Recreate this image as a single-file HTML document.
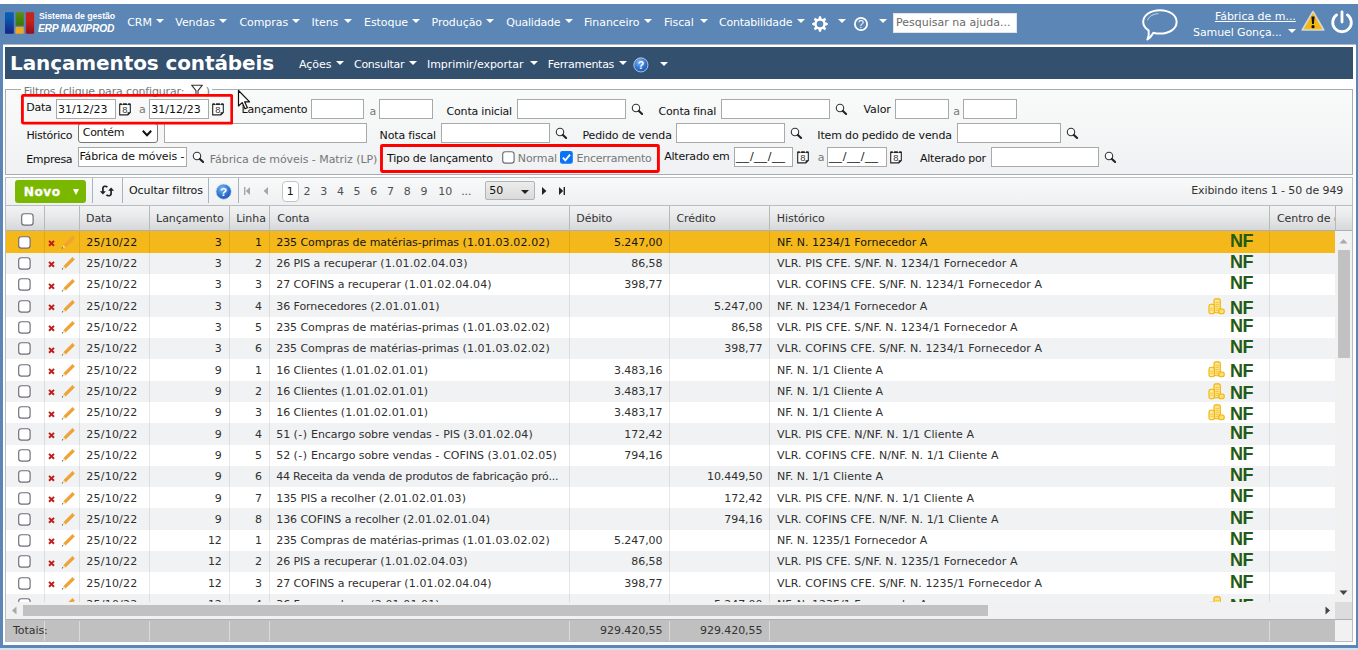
<!DOCTYPE html><html lang="pt-BR"><head><meta charset="utf-8"><title>Lançamentos contábeis</title><style>
*{box-sizing:border-box;margin:0;padding:0}
html,body{width:1358px;height:650px;overflow:hidden}
body{background:#5b86b5;font-family:"DejaVu Sans","Liberation Sans",sans-serif;font-size:11px;color:#111;position:relative}
.abs{position:absolute}
.t{position:absolute;white-space:nowrap;line-height:14px;height:14px;letter-spacing:-0.06px}
.w{color:#fff}
.inp{position:absolute;background:#fff;border:1.2px solid #a9a9a9;height:19.5px}
.inp>span{position:absolute;left:1px;top:2.4px;line-height:14px;white-space:nowrap}
.g{color:#777}
.u{display:inline-block;width:12.9px;transform:scaleX(1.172);transform-origin:0 50%}
.sl{display:inline-block;width:5.1px;text-align:center}
.arr{position:absolute;width:0;height:0;border-left:4.3px solid transparent;border-right:4.3px solid transparent;border-top:4.7px solid #fff}
.row{position:absolute;left:6px;width:1329px;height:21.4px;overflow:hidden}
.row .t{top:4.4px}
.r{text-align:right}
.vl{position:absolute;width:1px;background:#d4d4d4}
.cb{position:absolute;width:12.8px;height:12.8px;border:1.3px solid #6b6874;border-radius:3px;background:#fff}
.nf{position:absolute;font:bold 18px "Liberation Sans",sans-serif;color:#235a14;line-height:18px;letter-spacing:-0.4px}
</style></head><body>
<div class="abs" style="left:0;top:0;width:1358px;height:4px;background:#fff"></div>
<div class="abs" style="left:0;top:647.5px;width:1358px;height:3px;background:#cfe4f1"></div>
<svg class="abs" style="left:4px;top:11px" width="32" height="24" viewBox="0 0 32 24">
<defs><linearGradient id="lb" x1="0" y1="0" x2="0" y2="1"><stop offset="0.25" stop-color="#0b5bb2"/><stop offset="0.62" stop-color="#123f9c"/><stop offset="1" stop-color="#13238a"/></linearGradient>
<linearGradient id="lr" x1="0" y1="0" x2="0" y2="1"><stop offset="0.4" stop-color="#c6231e"/><stop offset="0.75" stop-color="#ab161d"/><stop offset="1" stop-color="#960c1c"/></linearGradient>
<linearGradient id="lg" x1="0" y1="0" x2="0" y2="1"><stop offset="0" stop-color="#5f8c0e"/><stop offset="1" stop-color="#37780a"/></linearGradient></defs>
<rect x="1" y="1.2" width="8.8" height="21.5" rx="0.8" fill="url(#lb)"/>
<rect x="11.7" y="1.2" width="8.1" height="13.6" rx="0.8" fill="url(#lg)"/>
<rect x="11.4" y="15.9" width="8.4" height="6.9" rx="1" fill="#efa91e"/>
<rect x="21.8" y="1.2" width="8.3" height="21.6" rx="0.8" fill="url(#lr)"/>
</svg>
<div class="t w" style="left:38.6px;top:9px;font:bold 9.6px 'Liberation Sans',sans-serif;line-height:14px;transform:scaleX(0.915);transform-origin:0 0">Sistema de gestão</div>
<div class="t w" style="left:38px;top:21px;font:italic bold 10.6px 'Liberation Sans',sans-serif;line-height:14px;letter-spacing:-0.25px;transform:scaleX(0.97);transform-origin:0 0">ERP MAXIPROD</div>
<div class="t w" style="top:16px;left:127.2px;">CRM</div>
<div class="arr" style="left:156.39999999999998px;top:19.2px"></div>
<div class="t w" style="top:16px;left:175.3px;">Vendas</div>
<div class="arr" style="left:219.0px;top:19.2px"></div>
<div class="t w" style="top:16px;left:239.4px;">Compras</div>
<div class="arr" style="left:291.7px;top:19.2px"></div>
<div class="t w" style="top:16px;left:311.5px;">Itens</div>
<div class="arr" style="left:344.2px;top:19.2px"></div>
<div class="t w" style="top:16px;left:364px;">Estoque</div>
<div class="arr" style="left:411.59999999999997px;top:19.2px"></div>
<div class="t w" style="top:16px;left:431.6px;">Produção</div>
<div class="arr" style="left:486.2px;top:19.2px"></div>
<div class="t w" style="top:16px;left:506.3px;letter-spacing:-0.22px">Qualidade</div>
<div class="arr" style="left:565.3000000000001px;top:19.2px"></div>
<div class="t w" style="top:16px;left:583.9px;">Financeiro</div>
<div class="arr" style="left:644.2px;top:19.2px"></div>
<div class="t w" style="top:16px;left:664px;">Fiscal</div>
<div class="arr" style="left:699.5px;top:19.2px"></div>
<div class="t w" style="top:16px;left:719px;letter-spacing:-0.22px">Contabilidade</div>
<div class="arr" style="left:796.5px;top:19.2px"></div>
<svg class="abs" style="left:811px;top:14.9px" width="18" height="18" viewBox="-9 -9 18 18"><path d="M-1.63 -5.25 L-1.01 -7.73 L1.01 -7.73 L1.63 -5.25 L2.57 -4.86 L4.75 -6.18 L6.18 -4.75 L4.86 -2.57 L5.25 -1.63 L7.73 -1.01 L7.73 1.01 L5.25 1.63 L4.86 2.57 L6.18 4.75 L4.75 6.18 L2.57 4.86 L1.63 5.25 L1.01 7.73 L-1.01 7.73 L-1.63 5.25 L-2.57 4.86 L-4.75 6.18 L-6.18 4.75 L-4.86 2.57 L-5.25 1.63 L-7.73 1.01 L-7.73 -1.01 L-5.25 -1.63 L-4.86 -2.57 L-6.18 -4.75 L-4.75 -6.18 L-2.57 -4.86Z" fill="#fff"/><circle r="5.4" fill="#fff"/><circle r="3.3" fill="#5b86b5"/></svg>
<div class="arr" style="left:837.8px;top:18.8px"></div>
<svg class="abs" style="left:852.9px;top:16px" width="16" height="16" viewBox="0 0 16 16"><circle cx="8" cy="8" r="6.1" fill="none" stroke="#fff" stroke-width="1.8"/>
<text x="8" y="11.8" text-anchor="middle" font-family="Liberation Sans,sans-serif" font-size="10.5" fill="#fff">?</text></svg>
<div class="arr" style="left:878.8px;top:18.8px"></div>
<div class="inp" style="left:893px;top:13.2px;width:124px;height:19.6px;border-color:#e4e4e4"><span style="left:2px;top:2px;color:#6a6a6a">Pesquisar na ajuda...</span></div>
<svg class="abs" style="left:1140px;top:7px" width="40" height="36" viewBox="0 0 40 36">
<path d="M20 3.2 C29.5 3.2 36.6 8.2 36.6 15 C36.6 21.8 29.5 26.6 20 26.6 C17.6 26.6 15.4 26.3 13.4 25.7 C11.8 28.6 10.2 30.8 7.4 32.4 C8.8 29.6 9.2 26.6 8.6 23.4 C5.2 21.2 3.2 18.4 3.2 15 C3.2 8.2 10.5 3.2 20 3.2 Z" fill="none" stroke="#fff" stroke-width="2" stroke-linejoin="round"/>
<path d="M7.6 13.2 C8.8 9.4 13 7 18.4 6.6" fill="none" stroke="#fff" stroke-width="0.9" opacity="0.75"/></svg>
<div class="t w" style="top:9.6px;right:62.200000000000045px;text-decoration:underline;letter-spacing:-0.03px">Fábrica de m...</div>
<div class="t w" style="top:26.4px;left:1193px;letter-spacing:-0.1px">Samuel Gonça...</div>
<div class="arr" style="left:1288.2px;top:29.2px"></div>
<svg class="abs" style="left:1300px;top:9px" width="26" height="24" viewBox="0 0 26 24">
<path d="M13 2.5 L23.8 21 H2.2 Z" fill="#f6c21c" stroke="#d6d6d6" stroke-width="1.6" stroke-linejoin="round"/>
<path d="M13 4.5 L21.5 19.6 H4.5 Z" fill="#f3b80f"/>
<path d="M11.4 7.6 H14.6 L13.9 15 H12.1 Z" fill="#111"/><circle cx="13" cy="17.7" r="1.6" fill="#111"/></svg>
<svg class="abs" style="left:1329.3px;top:9px" width="26" height="26" viewBox="0 0 26 26">
<path d="M7.6 5.9 A9.3 9.3 0 1 0 18.4 5.9" fill="none" stroke="#fff" stroke-width="2.8" stroke-linecap="round"/>
<line x1="13" y1="2.8" x2="13" y2="13" stroke="#fff" stroke-width="2.8" stroke-linecap="round"/></svg>
<div class="abs" style="left:3px;top:44px;width:1352.5px;height:601.1px;background:#fff;border-top:1px solid #b4b9bf"></div>
<div class="abs" style="left:5px;top:47px;width:1348px;height:31.5px;background:#34506f"></div>
<div class="t w" style="left:10px;top:49px;font:bold 20px 'DejaVu Sans','Liberation Sans',sans-serif;line-height:28px;height:28px;letter-spacing:-0.1px">Lançamentos contábeis</div>
<div class="t w" style="top:57.7px;left:299px;">Ações</div>
<div class="arr" style="left:336.2px;top:61px"></div>
<div class="t w" style="top:57.7px;left:354px;letter-spacing:-0.28px">Consultar</div>
<div class="arr" style="left:409.3px;top:61px"></div>
<div class="t w" style="top:57.7px;left:427px;">Imprimir/exportar</div>
<div class="arr" style="left:529.5px;top:61px"></div>
<div class="t w" style="top:57.7px;left:547.8px;letter-spacing:-0.28px">Ferramentas</div>
<div class="arr" style="left:619.1px;top:61px"></div>
<svg class="abs" style="left:633.4px;top:57px" width="15.8" height="15.8" viewBox="0 0 17 17">
<defs><radialGradient id="hg1" cx="0.4" cy="0.3" r="0.8"><stop offset="0" stop-color="#7db4f0"/><stop offset="0.6" stop-color="#2a6fd0"/><stop offset="1" stop-color="#1b4fa8"/></radialGradient></defs>
<circle cx="8.5" cy="8.5" r="7.6" fill="url(#hg1)" stroke="#dfe9f5" stroke-width="0.8"/>
<text x="8.5" y="12.6" text-anchor="middle" font-family="Liberation Sans,sans-serif" font-weight="bold" font-size="11.5" fill="#fff">?</text></svg>
<div class="arr" style="left:660px;top:61.5px"></div>
<div class="abs" style="left:5px;top:89px;width:1348px;height:86px;border:1px solid #a9adb3;background:linear-gradient(#f9fafa,#f0f1f2)"></div>
<div class="abs" style="left:20.5px;top:88px;width:191px;height:3px;background:#fff"></div>
<div class="t g" style="top:84.5px;left:23.8px;letter-spacing:-0.15px">Filtros (clique para configurar:</div>
<div class="t g" style="top:84.5px;left:205.8px;">)</div>
<svg class="abs" style="left:190px;top:83.6px" width="14" height="12" viewBox="0 0 14 12"><path d="M1.6 1.2 H12.4 L8 6.6 V11 H6 V6.6 Z" fill="#fff" stroke="#333" stroke-width="1.1" stroke-linejoin="round"/><path d="M6.4 7 H7.6 V11 H6.4Z" fill="#999"/></svg>
<div class="t " style="top:101.2px;left:26.3px;letter-spacing:-0.25px">Data</div>
<div class="inp" style="left:56px;top:99.2px;width:59.8px;height:19.5px;letter-spacing:0.02px"><span>31/12/23</span></div>
<svg class="abs" style="left:118px;top:102px" width="14" height="14" viewBox="0 0 14 14">
<path d="M1.7 2.2 H12.3 V10.4 L9.8 12.9 H1.7 Z" fill="#fff" stroke="#222" stroke-width="1.1" stroke-linejoin="miter"/>
<path d="M1.7 2.2 H12.3" stroke="#222" stroke-width="1.7"/>
<circle cx="4.4" cy="1.7" r="0.8" fill="#fff"/><circle cx="9.5" cy="1.7" r="0.8" fill="#fff"/>
<path d="M12.3 10.2 L9.6 12.9 V10.2 Z" fill="#1c1c1c"/>
<text x="6.9" y="11.3" text-anchor="middle" font-family="Liberation Sans,sans-serif" font-size="9.4" fill="#333">8</text></svg>
<div class="t g" style="top:102.6px;left:139px;">a</div>
<div class="inp" style="left:149.2px;top:99.2px;width:59.4px;height:19.5px;letter-spacing:0.02px"><span>31/12/23</span></div>
<svg class="abs" style="left:211.3px;top:102px" width="14" height="14" viewBox="0 0 14 14">
<path d="M1.7 2.2 H12.3 V10.4 L9.8 12.9 H1.7 Z" fill="#fff" stroke="#222" stroke-width="1.1" stroke-linejoin="miter"/>
<path d="M1.7 2.2 H12.3" stroke="#222" stroke-width="1.7"/>
<circle cx="4.4" cy="1.7" r="0.8" fill="#fff"/><circle cx="9.5" cy="1.7" r="0.8" fill="#fff"/>
<path d="M12.3 10.2 L9.6 12.9 V10.2 Z" fill="#1c1c1c"/>
<text x="6.9" y="11.3" text-anchor="middle" font-family="Liberation Sans,sans-serif" font-size="9.4" fill="#333">8</text></svg>
<div class="t " style="top:103.2px;left:241.6px;letter-spacing:-0.25px">Lançamento</div>
<div class="inp" style="left:311.2px;top:99.2px;width:53.1px;height:19.5px;"></div>
<div class="t g" style="top:104.8px;left:369.6px;">a</div>
<div class="inp" style="left:379.3px;top:99.2px;width:53.3px;height:19.5px;"></div>
<div class="t " style="top:104.5px;left:446.6px;letter-spacing:-0.2px">Conta inicial</div>
<div class="inp" style="left:517px;top:99.2px;width:108.7px;height:19.5px;"></div>
<svg class="abs" style="left:629.9px;top:102.6px" width="14" height="14" viewBox="0 0 14 14">
<circle cx="6" cy="5" r="3.7" fill="#fbfbfb" stroke="#333" stroke-width="1.1"/>
<path d="M8.9 7.9 L12.1 11" stroke="#222" stroke-width="2.1" stroke-linecap="round"/></svg>
<div class="t " style="top:104.5px;left:658.6px;letter-spacing:-0.2px">Conta final</div>
<div class="inp" style="left:721.3px;top:99.2px;width:108.4px;height:19.5px;"></div>
<svg class="abs" style="left:833.9px;top:102.6px" width="14" height="14" viewBox="0 0 14 14">
<circle cx="6" cy="5" r="3.7" fill="#fbfbfb" stroke="#333" stroke-width="1.1"/>
<path d="M8.9 7.9 L12.1 11" stroke="#222" stroke-width="2.1" stroke-linecap="round"/></svg>
<div class="t " style="top:103px;left:863.4px;">Valor</div>
<div class="inp" style="left:895.3px;top:99.2px;width:53.4px;height:19.5px;"></div>
<div class="t g" style="top:104.8px;left:953.3px;">a</div>
<div class="inp" style="left:963.2px;top:99.2px;width:53.6px;height:19.5px;"></div>
<div class="t " style="top:128.7px;left:26.4px;letter-spacing:-0.3px">Histórico</div>
<div class="inp" style="left:78.4px;top:123.4px;width:79.5px;height:19.5px;border:1px solid #767676;border-radius:3px"><span style="left:3.4px;top:2px;letter-spacing:-0.3px">Contém</span><svg class="abs" style="left:62px;top:5px" width="12" height="9" viewBox="0 0 12 9"><path d="M1.8 1.8 L6 6.2 L10.2 1.8" fill="none" stroke="#111" stroke-width="2"/></svg></div>
<div class="inp" style="left:163.5px;top:123.2px;width:203.3px;height:19.5px;"></div>
<div class="t " style="top:129.4px;left:379.6px;letter-spacing:-0.15px">Nota fiscal</div>
<div class="inp" style="left:441.2px;top:123.2px;width:108.4px;height:19.5px;"></div>
<svg class="abs" style="left:553.8px;top:126.6px" width="14" height="14" viewBox="0 0 14 14">
<circle cx="6" cy="5" r="3.7" fill="#fbfbfb" stroke="#333" stroke-width="1.1"/>
<path d="M8.9 7.9 L12.1 11" stroke="#222" stroke-width="2.1" stroke-linecap="round"/></svg>
<div class="t " style="top:129.4px;left:582.5px;letter-spacing:-0.15px">Pedido de venda</div>
<div class="inp" style="left:676px;top:123.2px;width:108.7px;height:19.5px;"></div>
<svg class="abs" style="left:788.9px;top:126.6px" width="14" height="14" viewBox="0 0 14 14">
<circle cx="6" cy="5" r="3.7" fill="#fbfbfb" stroke="#333" stroke-width="1.1"/>
<path d="M8.9 7.9 L12.1 11" stroke="#222" stroke-width="2.1" stroke-linecap="round"/></svg>
<div class="t " style="top:129.2px;left:817.3px;letter-spacing:-0.15px">Item do pedido de venda</div>
<div class="inp" style="left:957.4px;top:123.2px;width:103.2px;height:19.5px;"></div>
<svg class="abs" style="left:1064.8px;top:126.6px" width="14" height="14" viewBox="0 0 14 14">
<circle cx="6" cy="5" r="3.7" fill="#fbfbfb" stroke="#333" stroke-width="1.1"/>
<path d="M8.9 7.9 L12.1 11" stroke="#222" stroke-width="2.1" stroke-linecap="round"/></svg>
<div class="t " style="top:153.1px;left:26.2px;letter-spacing:-0.3px">Empresa</div>
<div class="inp" style="left:78.4px;top:147px;width:108.6px;height:19.5px;overflow:hidden;text-indent:-1px;letter-spacing:-0.12px"><span>Fábrica de móveis -</span></div>
<svg class="abs" style="left:190.7px;top:150.6px" width="14" height="14" viewBox="0 0 14 14">
<circle cx="6" cy="5" r="3.7" fill="#fbfbfb" stroke="#333" stroke-width="1.1"/>
<path d="M8.9 7.9 L12.1 11" stroke="#222" stroke-width="2.1" stroke-linecap="round"/></svg>
<div class="t g" style="top:153.2px;left:209.8px;">Fábrica de móveis - Matriz (LP)</div>
<div class="t " style="top:151.7px;left:387px;letter-spacing:-0.18px">Tipo de lançamento</div>
<svg class="abs" style="left:502px;top:151.1px" width="13" height="13" viewBox="0 0 13 13"><rect x="0.7" y="0.7" width="11.4" height="11.4" rx="2.6" fill="#fff" stroke="#6f6c78" stroke-width="1.15"/></svg>
<div class="t g" style="top:152px;left:517.8px;letter-spacing:-0.1px">Normal</div>
<svg class="abs" style="left:560.1px;top:151px" width="13" height="13" viewBox="0 0 13 13"><rect x="0" y="0" width="12.8" height="12.8" rx="2.3" fill="#0b74f6"/><path d="M2.9 6.7 L5.3 9.3 L10 3.6" fill="none" stroke="#fff" stroke-width="1.8"/></svg>
<div class="t g" style="top:152px;left:576.6px;letter-spacing:-0.25px">Encerramento</div>
<div class="t " style="top:150.2px;left:664.2px;letter-spacing:-0.2px">Alterado em</div>
<div class="inp" style="left:734.3px;top:147px;width:59.1px;height:19.5px;"><span><span class="u">__</span><span class="sl">/</span><span class="u">__</span><span class="sl">/</span><span class="u">__</span></span></div>
<svg class="abs" style="left:796.2px;top:150px" width="14" height="14" viewBox="0 0 14 14">
<path d="M1.7 2.2 H12.3 V10.4 L9.8 12.9 H1.7 Z" fill="#fff" stroke="#222" stroke-width="1.1" stroke-linejoin="miter"/>
<path d="M1.7 2.2 H12.3" stroke="#222" stroke-width="1.7"/>
<circle cx="4.4" cy="1.7" r="0.8" fill="#fff"/><circle cx="9.5" cy="1.7" r="0.8" fill="#fff"/>
<path d="M12.3 10.2 L9.6 12.9 V10.2 Z" fill="#1c1c1c"/>
<text x="6.9" y="11.3" text-anchor="middle" font-family="Liberation Sans,sans-serif" font-size="9.4" fill="#333">8</text></svg>
<div class="t g" style="top:151px;left:817.7px;">a</div>
<div class="inp" style="left:827.2px;top:147px;width:59.4px;height:19.5px;"><span><span class="u">__</span><span class="sl">/</span><span class="u">__</span><span class="sl">/</span><span class="u">__</span></span></div>
<svg class="abs" style="left:889.3px;top:150px" width="14" height="14" viewBox="0 0 14 14">
<path d="M1.7 2.2 H12.3 V10.4 L9.8 12.9 H1.7 Z" fill="#fff" stroke="#222" stroke-width="1.1" stroke-linejoin="miter"/>
<path d="M1.7 2.2 H12.3" stroke="#222" stroke-width="1.7"/>
<circle cx="4.4" cy="1.7" r="0.8" fill="#fff"/><circle cx="9.5" cy="1.7" r="0.8" fill="#fff"/>
<path d="M12.3 10.2 L9.6 12.9 V10.2 Z" fill="#1c1c1c"/>
<text x="6.9" y="11.3" text-anchor="middle" font-family="Liberation Sans,sans-serif" font-size="9.4" fill="#333">8</text></svg>
<div class="t " style="top:152.4px;left:919.9px;letter-spacing:-0.2px">Alterado por</div>
<div class="inp" style="left:990.5px;top:147px;width:108.4px;height:19.5px;"></div>
<svg class="abs" style="left:1103.1px;top:150.6px" width="14" height="14" viewBox="0 0 14 14">
<circle cx="6" cy="5" r="3.7" fill="#fbfbfb" stroke="#333" stroke-width="1.1"/>
<path d="M8.9 7.9 L12.1 11" stroke="#222" stroke-width="2.1" stroke-linecap="round"/></svg>
<svg class="abs" style="left:21.2px;top:94.2px" width="212.20000000000002" height="30.599999999999994" viewBox="0 0 212.20000000000002 30.599999999999994"><rect x="1.4" y="1.4" width="209.4" height="27.799999999999994" rx="0.9" fill="none" stroke="#ff0000" stroke-width="2.8"/></svg>
<svg class="abs" style="left:380px;top:144px" width="279.9" height="28.900000000000006" viewBox="0 0 279.9 28.900000000000006"><rect x="1.45" y="1.45" width="277.0" height="26.000000000000007" rx="0.9" fill="none" stroke="#ff0000" stroke-width="2.9"/></svg>
<svg class="abs" style="left:237px;top:88.5px" width="15" height="22" viewBox="0 0 15 22"><path d="M1.5 1.5 V17 L5.2 13.6 L8 19.8 L10.4 18.8 L7.6 12.8 H12.6 Z" fill="#fff" stroke="#111" stroke-width="1.2" stroke-linejoin="round"/></svg>
<div class="abs" style="left:5px;top:176.5px;width:1348px;height:29.5px;border:1px solid #b9bfc7;background:linear-gradient(#f8f9f9,#eff0f1)"></div>
<div class="abs" style="left:15px;top:180px;width:71px;height:23px;background:#7ab800;border-radius:3px"></div>
<div class="t w" style="left:23.8px;top:184.1px;font:bold 12.2px 'DejaVu Sans','Liberation Sans',sans-serif;line-height:17px;height:17px;letter-spacing:0.5px;-webkit-text-stroke:0.3px #fff">Novo</div>
<div class="arr" style="left:73px;top:188.9px;border-left-width:3px;border-right-width:3px;border-top-width:6px"></div>
<div class="vl" style="left:92px;top:178px;height:24.5px;background:#a9b3c0"></div>
<div class="vl" style="left:122px;top:178px;height:24.5px;background:#a9b3c0"></div>
<div class="vl" style="left:208px;top:178px;height:24.5px;background:#a9b3c0"></div>
<div class="vl" style="left:238px;top:178px;height:24.5px;background:#a9b3c0"></div>
<svg class="abs" style="left:99px;top:185px" width="16" height="12" viewBox="0 0 16 12">
<path d="M8.3 2.3 C7.4 0.9 3.9 0.6 3.9 3.4 V7" fill="none" stroke="#222" stroke-width="1.7"/>
<path d="M0.9 6.2 H6.9 L3.9 9.5 Z" fill="#222"/>
<path d="M7.5 9.7 C8.4 11.1 12.1 11.4 12.1 8.6 V5" fill="none" stroke="#222" stroke-width="1.7"/>
<path d="M9.1 5.8 H15.1 L12.1 2.5 Z" fill="#222"/></svg>
<div class="t " style="top:184.2px;left:129px;">Ocultar filtros</div>
<svg class="abs" style="left:214.9px;top:183.2px" width="17.3" height="17.3" viewBox="0 0 17 17">
<defs><radialGradient id="hg2" cx="0.4" cy="0.3" r="0.8"><stop offset="0" stop-color="#7db4f0"/><stop offset="0.6" stop-color="#2a6fd0"/><stop offset="1" stop-color="#1b4fa8"/></radialGradient></defs>
<circle cx="8.5" cy="8.5" r="7.6" fill="url(#hg2)" stroke="#dfe9f5" stroke-width="0.8"/>
<text x="8.5" y="12.6" text-anchor="middle" font-family="Liberation Sans,sans-serif" font-weight="bold" font-size="11.5" fill="#fff">?</text></svg>
<svg class="abs" style="left:243px;top:186px" width="8" height="10" viewBox="0 0 8 10"><rect x="1" y="1" width="1.4" height="8" fill="#a6a6a6"/><path d="M7 1 V9 L2.8 5Z" fill="#a6a6a6"/></svg>
<svg class="abs" style="left:262px;top:186px" width="8" height="10" viewBox="0 0 8 10"><path d="M6 1 V9 L1.6 5Z" fill="#a6a6a6"/></svg>
<div class="abs" style="left:282px;top:180.5px;width:16.6px;height:21px;border:1px solid #c4c4c4;border-radius:4px;background:#fff"></div>
<div class="t " style="top:184.6px;left:286.7px;">1</div>
<div class="t " style="top:184.6px;left:303.5px;color:#505050">2</div>
<div class="t " style="top:184.6px;left:320.2px;color:#505050">3</div>
<div class="t " style="top:184.6px;left:337px;color:#505050">4</div>
<div class="t " style="top:184.6px;left:353.6px;color:#505050">5</div>
<div class="t " style="top:184.6px;left:370.3px;color:#505050">6</div>
<div class="t " style="top:184.6px;left:387px;color:#505050">7</div>
<div class="t " style="top:184.6px;left:403.8px;color:#505050">8</div>
<div class="t " style="top:184.6px;left:420.4px;color:#505050">9</div>
<div class="t " style="top:184.6px;left:438.2px;color:#505050">10</div>
<div class="t " style="top:184.6px;left:461.2px;color:#505050">...</div>
<div class="abs" style="left:485px;top:181px;width:49.8px;height:19px;background:linear-gradient(#ececec,#dadada);border:1px solid #b4b4b4;border-radius:2px"></div>
<div class="t " style="top:183.6px;left:489.3px;">50</div>
<div class="arr" style="left:521.2px;top:190.2px;border-top-color:#222;border-top-width:4.5px;border-left-width:4.9px;border-right-width:4.9px"></div>
<svg class="abs" style="left:540px;top:186px" width="8" height="10" viewBox="0 0 8 10"><path d="M2 1 V9 L6.4 5Z" fill="#222"/></svg>
<svg class="abs" style="left:558px;top:186px" width="8" height="10" viewBox="0 0 8 10"><path d="M1 1 V9 L5.2 5Z" fill="#222"/><rect x="5.6" y="1" width="1.4" height="8" fill="#222"/></svg>
<div class="t " style="top:184.2px;right:14.799999999999955px;color:#333;letter-spacing:-0.1px">Exibindo itens 1 - 50 de 949</div>
<div class="abs" style="left:5px;top:205px;width:1348px;height:437px;border:1px solid #b9bdc3;background:#fff"></div>
<div class="abs" style="left:6px;top:206px;width:1346px;height:25.4px;background:linear-gradient(#f2f3f3,#e8e9ea 45%,#d5d7da);border-bottom:1px solid #a9b0b9"></div>
<div class="abs" style="left:1335px;top:206px;width:17px;height:25.4px;background:linear-gradient(#f2f3f3,#e8e9ea 45%,#d5d7da);border-left:1px solid #b9b9b9;border-bottom:1px solid #a9b0b9"></div>
<div class="vl" style="left:43.7px;top:206px;height:25px;background:#b9b9b9"></div>
<div class="vl" style="left:79px;top:206px;height:25px;background:#b9b9b9"></div>
<div class="vl" style="left:149px;top:206px;height:25px;background:#b9b9b9"></div>
<div class="vl" style="left:229.2px;top:206px;height:25px;background:#b9b9b9"></div>
<div class="vl" style="left:268.5px;top:206px;height:25px;background:#b9b9b9"></div>
<div class="vl" style="left:569px;top:206px;height:25px;background:#b9b9b9"></div>
<div class="vl" style="left:669.4px;top:206px;height:25px;background:#b9b9b9"></div>
<div class="vl" style="left:769.4px;top:206px;height:25px;background:#b9b9b9"></div>
<div class="vl" style="left:1269.2px;top:206px;height:25px;background:#b9b9b9"></div>
<svg class="abs" style="left:21.3px;top:212.6px" width="13" height="13" viewBox="0 0 13 13"><rect x="0.7" y="0.7" width="11.4" height="11.4" rx="2.6" fill="#fff" stroke="#6f6c78" stroke-width="1.15"/></svg>
<div class="t" style="left:86.0px;top:211.7px;color:#333;">Data</div>
<div class="t" style="left:156.1px;top:211.7px;color:#333;">Lançamento</div>
<div class="t" style="left:236.3px;top:211.7px;color:#333;">Linha</div>
<div class="t" style="left:277.29999999999995px;top:211.7px;color:#333;">Conta</div>
<div class="t" style="left:576.3px;top:211.7px;color:#333;">Débito</div>
<div class="t" style="left:676.4px;top:211.7px;color:#333;">Crédito</div>
<div class="t" style="left:776.8px;top:211.7px;color:#333;">Histórico</div>
<div class="t" style="left:1277.0px;top:211.7px;color:#333;width:57.6px;overflow:hidden;">Centro de c</div>
<div class="row" style="top:231.40px;height:21.61px;background:#f5b81b;color:#151515">
<svg class="abs" style="left:12.2px;top:4.4px" width="13" height="13" viewBox="0 0 13 13"><rect x="0.7" y="0.7" width="11.4" height="11.4" rx="2.6" fill="#fff" stroke="#6f6c78" stroke-width="1.15"/></svg><svg class="abs" style="left:41.9px;top:8.7px" width="7" height="7" viewBox="0 0 7 7"><path d="M1 0.9 L6 5.8 M6 0.9 L1 5.8" stroke="#c01a18" stroke-width="1.9"/></svg><svg class="abs" style="left:55.3px;top:3.7px" width="15" height="14" viewBox="0 0 15 14"><path d="M2.5 10.2 L11.5 1.3 L13.6 3.4 L4.6 12.3 Z" fill="#f0a234" stroke="#e59a2e" stroke-width="0.4"/><path d="M2.5 10.2 L4.6 12.3 L1.1 13.3 Z" fill="#f5deb0"/><path d="M1.1 13.3 L1.5 12.4 L2 12.9Z" fill="#333" stroke="#333" stroke-width="0.4"/></svg>
<div class="t" style="left:80.3px;letter-spacing:0.22px">25/10/22</div>
<div class="t r" style="right:1113.2px">3</div><div class="t r" style="right:1073.1px">1</div>
<div class="t" style="left:270.2px">235 Compras de matérias-primas <span style="letter-spacing:0.12px">(1.01.03.02.02)</span></div>
<div class="t r" style="right:672.5px">5.247,00</div>
<div class="t" style="left:770.9px;letter-spacing:0.02px">NF. N. 1234/1 Fornecedor A</div>
<div class="nf" style="left:1224px;top:0.3px">NF</div>
</div>
<div class="row" style="top:252.71px;height:21.61px;background:#f1f2f3;color:#303030">
<svg class="abs" style="left:12.2px;top:4.4px" width="13" height="13" viewBox="0 0 13 13"><rect x="0.7" y="0.7" width="11.4" height="11.4" rx="2.6" fill="#fff" stroke="#6f6c78" stroke-width="1.15"/></svg><svg class="abs" style="left:41.9px;top:8.7px" width="7" height="7" viewBox="0 0 7 7"><path d="M1 0.9 L6 5.8 M6 0.9 L1 5.8" stroke="#c01a18" stroke-width="1.9"/></svg><svg class="abs" style="left:55.3px;top:3.7px" width="15" height="14" viewBox="0 0 15 14"><path d="M2.5 10.2 L11.5 1.3 L13.6 3.4 L4.6 12.3 Z" fill="#f0a234" stroke="#e59a2e" stroke-width="0.4"/><path d="M2.5 10.2 L4.6 12.3 L1.1 13.3 Z" fill="#f5deb0"/><path d="M1.1 13.3 L1.5 12.4 L2 12.9Z" fill="#333" stroke="#333" stroke-width="0.4"/></svg>
<div class="t" style="left:80.3px;letter-spacing:0.22px">25/10/22</div>
<div class="t r" style="right:1113.2px">3</div><div class="t r" style="right:1073.1px">2</div>
<div class="t" style="left:270.2px">26 PIS a recuperar <span style="letter-spacing:0.12px">(1.01.02.04.03)</span></div>
<div class="t r" style="right:672.5px">86,58</div>
<div class="t" style="left:770.9px;letter-spacing:0.09px">VLR. PIS CFE. S/NF. N. 1234/1 Fornecedor A</div>
<div class="nf" style="left:1224px;top:0.3px">NF</div>
</div>
<div class="row" style="top:274.02px;height:21.61px;background:#fff;color:#303030">
<svg class="abs" style="left:12.2px;top:4.4px" width="13" height="13" viewBox="0 0 13 13"><rect x="0.7" y="0.7" width="11.4" height="11.4" rx="2.6" fill="#fff" stroke="#6f6c78" stroke-width="1.15"/></svg><svg class="abs" style="left:41.9px;top:8.7px" width="7" height="7" viewBox="0 0 7 7"><path d="M1 0.9 L6 5.8 M6 0.9 L1 5.8" stroke="#c01a18" stroke-width="1.9"/></svg><svg class="abs" style="left:55.3px;top:3.7px" width="15" height="14" viewBox="0 0 15 14"><path d="M2.5 10.2 L11.5 1.3 L13.6 3.4 L4.6 12.3 Z" fill="#f0a234" stroke="#e59a2e" stroke-width="0.4"/><path d="M2.5 10.2 L4.6 12.3 L1.1 13.3 Z" fill="#f5deb0"/><path d="M1.1 13.3 L1.5 12.4 L2 12.9Z" fill="#333" stroke="#333" stroke-width="0.4"/></svg>
<div class="t" style="left:80.3px;letter-spacing:0.22px">25/10/22</div>
<div class="t r" style="right:1113.2px">3</div><div class="t r" style="right:1073.1px">3</div>
<div class="t" style="left:270.2px">27 COFINS a recuperar <span style="letter-spacing:0.12px">(1.01.02.04.04)</span></div>
<div class="t r" style="right:672.5px">398,77</div>
<div class="t" style="left:770.9px;letter-spacing:0.09px">VLR. COFINS CFE. S/NF. N. 1234/1 Fornecedor A</div>
<div class="nf" style="left:1224px;top:0.3px">NF</div>
</div>
<div class="row" style="top:295.34px;height:21.61px;background:#f1f2f3;color:#303030">
<svg class="abs" style="left:12.2px;top:4.4px" width="13" height="13" viewBox="0 0 13 13"><rect x="0.7" y="0.7" width="11.4" height="11.4" rx="2.6" fill="#fff" stroke="#6f6c78" stroke-width="1.15"/></svg><svg class="abs" style="left:41.9px;top:8.7px" width="7" height="7" viewBox="0 0 7 7"><path d="M1 0.9 L6 5.8 M6 0.9 L1 5.8" stroke="#c01a18" stroke-width="1.9"/></svg><svg class="abs" style="left:55.3px;top:3.7px" width="15" height="14" viewBox="0 0 15 14"><path d="M2.5 10.2 L11.5 1.3 L13.6 3.4 L4.6 12.3 Z" fill="#f0a234" stroke="#e59a2e" stroke-width="0.4"/><path d="M2.5 10.2 L4.6 12.3 L1.1 13.3 Z" fill="#f5deb0"/><path d="M1.1 13.3 L1.5 12.4 L2 12.9Z" fill="#333" stroke="#333" stroke-width="0.4"/></svg>
<div class="t" style="left:80.3px;letter-spacing:0.22px">25/10/22</div>
<div class="t r" style="right:1113.2px">3</div><div class="t r" style="right:1073.1px">4</div>
<div class="t" style="left:270.2px">36 Fornecedores <span style="letter-spacing:0.12px">(2.01.01.01)</span></div>
<div class="t r" style="right:572.6px">5.247,00</div>
<div class="t" style="left:770.9px;letter-spacing:0.02px">NF. N. 1234/1 Fornecedor A</div>
<svg class="abs" style="left:1202.1px;top:2.2px" width="17" height="17" viewBox="0 0 17 17"><g stroke="#f2b100" stroke-width="1.1"><rect x="6" y="0.9" width="6.3" height="13.9" rx="1.7" fill="#fbe794"/><path d="M7.4 4.4H10.9M7.4 6.4H10.9M7.4 8.4H10.9M7.4 10.4H10.9M7.4 12.4H10.9" stroke="#f5c02a" stroke-width="0.9"/><rect x="1" y="6.3" width="5.3" height="9.4" rx="1.7" fill="#fce99a"/><path d="M2.4 10.3H4.9M2.4 12.3H4.9" stroke="#f5c02a" stroke-width="0.9"/><rect x="10.8" y="11" width="5.4" height="4.8" rx="1.7" fill="#fbe17c"/></g></svg>
<div class="nf" style="left:1224px;top:3.2px">NF</div>
</div>
<div class="row" style="top:316.65px;height:21.61px;background:#fff;color:#303030">
<svg class="abs" style="left:12.2px;top:4.4px" width="13" height="13" viewBox="0 0 13 13"><rect x="0.7" y="0.7" width="11.4" height="11.4" rx="2.6" fill="#fff" stroke="#6f6c78" stroke-width="1.15"/></svg><svg class="abs" style="left:41.9px;top:8.7px" width="7" height="7" viewBox="0 0 7 7"><path d="M1 0.9 L6 5.8 M6 0.9 L1 5.8" stroke="#c01a18" stroke-width="1.9"/></svg><svg class="abs" style="left:55.3px;top:3.7px" width="15" height="14" viewBox="0 0 15 14"><path d="M2.5 10.2 L11.5 1.3 L13.6 3.4 L4.6 12.3 Z" fill="#f0a234" stroke="#e59a2e" stroke-width="0.4"/><path d="M2.5 10.2 L4.6 12.3 L1.1 13.3 Z" fill="#f5deb0"/><path d="M1.1 13.3 L1.5 12.4 L2 12.9Z" fill="#333" stroke="#333" stroke-width="0.4"/></svg>
<div class="t" style="left:80.3px;letter-spacing:0.22px">25/10/22</div>
<div class="t r" style="right:1113.2px">3</div><div class="t r" style="right:1073.1px">5</div>
<div class="t" style="left:270.2px">235 Compras de matérias-primas <span style="letter-spacing:0.12px">(1.01.03.02.02)</span></div>
<div class="t r" style="right:572.6px">86,58</div>
<div class="t" style="left:770.9px;letter-spacing:0.09px">VLR. PIS CFE. S/NF. N. 1234/1 Fornecedor A</div>
<div class="nf" style="left:1224px;top:0.3px">NF</div>
</div>
<div class="row" style="top:337.96px;height:21.61px;background:#f1f2f3;color:#303030">
<svg class="abs" style="left:12.2px;top:4.4px" width="13" height="13" viewBox="0 0 13 13"><rect x="0.7" y="0.7" width="11.4" height="11.4" rx="2.6" fill="#fff" stroke="#6f6c78" stroke-width="1.15"/></svg><svg class="abs" style="left:41.9px;top:8.7px" width="7" height="7" viewBox="0 0 7 7"><path d="M1 0.9 L6 5.8 M6 0.9 L1 5.8" stroke="#c01a18" stroke-width="1.9"/></svg><svg class="abs" style="left:55.3px;top:3.7px" width="15" height="14" viewBox="0 0 15 14"><path d="M2.5 10.2 L11.5 1.3 L13.6 3.4 L4.6 12.3 Z" fill="#f0a234" stroke="#e59a2e" stroke-width="0.4"/><path d="M2.5 10.2 L4.6 12.3 L1.1 13.3 Z" fill="#f5deb0"/><path d="M1.1 13.3 L1.5 12.4 L2 12.9Z" fill="#333" stroke="#333" stroke-width="0.4"/></svg>
<div class="t" style="left:80.3px;letter-spacing:0.22px">25/10/22</div>
<div class="t r" style="right:1113.2px">3</div><div class="t r" style="right:1073.1px">6</div>
<div class="t" style="left:270.2px">235 Compras de matérias-primas <span style="letter-spacing:0.12px">(1.01.03.02.02)</span></div>
<div class="t r" style="right:572.6px">398,77</div>
<div class="t" style="left:770.9px;letter-spacing:0.09px">VLR. COFINS CFE. S/NF. N. 1234/1 Fornecedor A</div>
<div class="nf" style="left:1224px;top:0.3px">NF</div>
</div>
<div class="row" style="top:359.27px;height:21.61px;background:#fff;color:#303030">
<svg class="abs" style="left:12.2px;top:4.4px" width="13" height="13" viewBox="0 0 13 13"><rect x="0.7" y="0.7" width="11.4" height="11.4" rx="2.6" fill="#fff" stroke="#6f6c78" stroke-width="1.15"/></svg><svg class="abs" style="left:41.9px;top:8.7px" width="7" height="7" viewBox="0 0 7 7"><path d="M1 0.9 L6 5.8 M6 0.9 L1 5.8" stroke="#c01a18" stroke-width="1.9"/></svg><svg class="abs" style="left:55.3px;top:3.7px" width="15" height="14" viewBox="0 0 15 14"><path d="M2.5 10.2 L11.5 1.3 L13.6 3.4 L4.6 12.3 Z" fill="#f0a234" stroke="#e59a2e" stroke-width="0.4"/><path d="M2.5 10.2 L4.6 12.3 L1.1 13.3 Z" fill="#f5deb0"/><path d="M1.1 13.3 L1.5 12.4 L2 12.9Z" fill="#333" stroke="#333" stroke-width="0.4"/></svg>
<div class="t" style="left:80.3px;letter-spacing:0.22px">25/10/22</div>
<div class="t r" style="right:1113.2px">9</div><div class="t r" style="right:1073.1px">1</div>
<div class="t" style="left:270.2px">16 Clientes <span style="letter-spacing:0.12px">(1.01.02.01.01)</span></div>
<div class="t r" style="right:672.5px">3.483,16</div>
<div class="t" style="left:770.9px;letter-spacing:0.02px">NF. N. 1/1 Cliente A</div>
<svg class="abs" style="left:1202.1px;top:2.2px" width="17" height="17" viewBox="0 0 17 17"><g stroke="#f2b100" stroke-width="1.1"><rect x="6" y="0.9" width="6.3" height="13.9" rx="1.7" fill="#fbe794"/><path d="M7.4 4.4H10.9M7.4 6.4H10.9M7.4 8.4H10.9M7.4 10.4H10.9M7.4 12.4H10.9" stroke="#f5c02a" stroke-width="0.9"/><rect x="1" y="6.3" width="5.3" height="9.4" rx="1.7" fill="#fce99a"/><path d="M2.4 10.3H4.9M2.4 12.3H4.9" stroke="#f5c02a" stroke-width="0.9"/><rect x="10.8" y="11" width="5.4" height="4.8" rx="1.7" fill="#fbe17c"/></g></svg>
<div class="nf" style="left:1224px;top:3.2px">NF</div>
</div>
<div class="row" style="top:380.59px;height:21.61px;background:#f1f2f3;color:#303030">
<svg class="abs" style="left:12.2px;top:4.4px" width="13" height="13" viewBox="0 0 13 13"><rect x="0.7" y="0.7" width="11.4" height="11.4" rx="2.6" fill="#fff" stroke="#6f6c78" stroke-width="1.15"/></svg><svg class="abs" style="left:41.9px;top:8.7px" width="7" height="7" viewBox="0 0 7 7"><path d="M1 0.9 L6 5.8 M6 0.9 L1 5.8" stroke="#c01a18" stroke-width="1.9"/></svg><svg class="abs" style="left:55.3px;top:3.7px" width="15" height="14" viewBox="0 0 15 14"><path d="M2.5 10.2 L11.5 1.3 L13.6 3.4 L4.6 12.3 Z" fill="#f0a234" stroke="#e59a2e" stroke-width="0.4"/><path d="M2.5 10.2 L4.6 12.3 L1.1 13.3 Z" fill="#f5deb0"/><path d="M1.1 13.3 L1.5 12.4 L2 12.9Z" fill="#333" stroke="#333" stroke-width="0.4"/></svg>
<div class="t" style="left:80.3px;letter-spacing:0.22px">25/10/22</div>
<div class="t r" style="right:1113.2px">9</div><div class="t r" style="right:1073.1px">2</div>
<div class="t" style="left:270.2px">16 Clientes <span style="letter-spacing:0.12px">(1.01.02.01.01)</span></div>
<div class="t r" style="right:672.5px">3.483,17</div>
<div class="t" style="left:770.9px;letter-spacing:0.02px">NF. N. 1/1 Cliente A</div>
<svg class="abs" style="left:1202.1px;top:2.2px" width="17" height="17" viewBox="0 0 17 17"><g stroke="#f2b100" stroke-width="1.1"><rect x="6" y="0.9" width="6.3" height="13.9" rx="1.7" fill="#fbe794"/><path d="M7.4 4.4H10.9M7.4 6.4H10.9M7.4 8.4H10.9M7.4 10.4H10.9M7.4 12.4H10.9" stroke="#f5c02a" stroke-width="0.9"/><rect x="1" y="6.3" width="5.3" height="9.4" rx="1.7" fill="#fce99a"/><path d="M2.4 10.3H4.9M2.4 12.3H4.9" stroke="#f5c02a" stroke-width="0.9"/><rect x="10.8" y="11" width="5.4" height="4.8" rx="1.7" fill="#fbe17c"/></g></svg>
<div class="nf" style="left:1224px;top:3.2px">NF</div>
</div>
<div class="row" style="top:401.90px;height:21.61px;background:#fff;color:#303030">
<svg class="abs" style="left:12.2px;top:4.4px" width="13" height="13" viewBox="0 0 13 13"><rect x="0.7" y="0.7" width="11.4" height="11.4" rx="2.6" fill="#fff" stroke="#6f6c78" stroke-width="1.15"/></svg><svg class="abs" style="left:41.9px;top:8.7px" width="7" height="7" viewBox="0 0 7 7"><path d="M1 0.9 L6 5.8 M6 0.9 L1 5.8" stroke="#c01a18" stroke-width="1.9"/></svg><svg class="abs" style="left:55.3px;top:3.7px" width="15" height="14" viewBox="0 0 15 14"><path d="M2.5 10.2 L11.5 1.3 L13.6 3.4 L4.6 12.3 Z" fill="#f0a234" stroke="#e59a2e" stroke-width="0.4"/><path d="M2.5 10.2 L4.6 12.3 L1.1 13.3 Z" fill="#f5deb0"/><path d="M1.1 13.3 L1.5 12.4 L2 12.9Z" fill="#333" stroke="#333" stroke-width="0.4"/></svg>
<div class="t" style="left:80.3px;letter-spacing:0.22px">25/10/22</div>
<div class="t r" style="right:1113.2px">9</div><div class="t r" style="right:1073.1px">3</div>
<div class="t" style="left:270.2px">16 Clientes <span style="letter-spacing:0.12px">(1.01.02.01.01)</span></div>
<div class="t r" style="right:672.5px">3.483,17</div>
<div class="t" style="left:770.9px;letter-spacing:0.02px">NF. N. 1/1 Cliente A</div>
<svg class="abs" style="left:1202.1px;top:2.2px" width="17" height="17" viewBox="0 0 17 17"><g stroke="#f2b100" stroke-width="1.1"><rect x="6" y="0.9" width="6.3" height="13.9" rx="1.7" fill="#fbe794"/><path d="M7.4 4.4H10.9M7.4 6.4H10.9M7.4 8.4H10.9M7.4 10.4H10.9M7.4 12.4H10.9" stroke="#f5c02a" stroke-width="0.9"/><rect x="1" y="6.3" width="5.3" height="9.4" rx="1.7" fill="#fce99a"/><path d="M2.4 10.3H4.9M2.4 12.3H4.9" stroke="#f5c02a" stroke-width="0.9"/><rect x="10.8" y="11" width="5.4" height="4.8" rx="1.7" fill="#fbe17c"/></g></svg>
<div class="nf" style="left:1224px;top:3.2px">NF</div>
</div>
<div class="row" style="top:423.21px;height:21.61px;background:#f1f2f3;color:#303030">
<svg class="abs" style="left:12.2px;top:4.4px" width="13" height="13" viewBox="0 0 13 13"><rect x="0.7" y="0.7" width="11.4" height="11.4" rx="2.6" fill="#fff" stroke="#6f6c78" stroke-width="1.15"/></svg><svg class="abs" style="left:41.9px;top:8.7px" width="7" height="7" viewBox="0 0 7 7"><path d="M1 0.9 L6 5.8 M6 0.9 L1 5.8" stroke="#c01a18" stroke-width="1.9"/></svg><svg class="abs" style="left:55.3px;top:3.7px" width="15" height="14" viewBox="0 0 15 14"><path d="M2.5 10.2 L11.5 1.3 L13.6 3.4 L4.6 12.3 Z" fill="#f0a234" stroke="#e59a2e" stroke-width="0.4"/><path d="M2.5 10.2 L4.6 12.3 L1.1 13.3 Z" fill="#f5deb0"/><path d="M1.1 13.3 L1.5 12.4 L2 12.9Z" fill="#333" stroke="#333" stroke-width="0.4"/></svg>
<div class="t" style="left:80.3px;letter-spacing:0.22px">25/10/22</div>
<div class="t r" style="right:1113.2px">9</div><div class="t r" style="right:1073.1px">4</div>
<div class="t" style="left:270.2px">51 <span style="letter-spacing:0.5px">(-)</span> Encargo sobre vendas <span style="letter-spacing:0.6px">-</span> PIS <span style="letter-spacing:0.12px">(3.01.02.04)</span></div>
<div class="t r" style="right:672.5px">172,42</div>
<div class="t" style="left:770.9px;letter-spacing:0.09px">VLR. PIS CFE. N/NF. N. 1/1 Cliente A</div>
<div class="nf" style="left:1224px;top:0.3px">NF</div>
</div>
<div class="row" style="top:444.52px;height:21.61px;background:#fff;color:#303030">
<svg class="abs" style="left:12.2px;top:4.4px" width="13" height="13" viewBox="0 0 13 13"><rect x="0.7" y="0.7" width="11.4" height="11.4" rx="2.6" fill="#fff" stroke="#6f6c78" stroke-width="1.15"/></svg><svg class="abs" style="left:41.9px;top:8.7px" width="7" height="7" viewBox="0 0 7 7"><path d="M1 0.9 L6 5.8 M6 0.9 L1 5.8" stroke="#c01a18" stroke-width="1.9"/></svg><svg class="abs" style="left:55.3px;top:3.7px" width="15" height="14" viewBox="0 0 15 14"><path d="M2.5 10.2 L11.5 1.3 L13.6 3.4 L4.6 12.3 Z" fill="#f0a234" stroke="#e59a2e" stroke-width="0.4"/><path d="M2.5 10.2 L4.6 12.3 L1.1 13.3 Z" fill="#f5deb0"/><path d="M1.1 13.3 L1.5 12.4 L2 12.9Z" fill="#333" stroke="#333" stroke-width="0.4"/></svg>
<div class="t" style="left:80.3px;letter-spacing:0.22px">25/10/22</div>
<div class="t r" style="right:1113.2px">9</div><div class="t r" style="right:1073.1px">5</div>
<div class="t" style="left:270.2px">52 <span style="letter-spacing:0.5px">(-)</span> Encargo sobre vendas <span style="letter-spacing:0.6px">-</span> COFINS <span style="letter-spacing:0.12px">(3.01.02.05)</span></div>
<div class="t r" style="right:672.5px">794,16</div>
<div class="t" style="left:770.9px;letter-spacing:0.09px">VLR. COFINS CFE. N/NF. N. 1/1 Cliente A</div>
<div class="nf" style="left:1224px;top:0.3px">NF</div>
</div>
<div class="row" style="top:465.84px;height:21.61px;background:#f1f2f3;color:#303030">
<svg class="abs" style="left:12.2px;top:4.4px" width="13" height="13" viewBox="0 0 13 13"><rect x="0.7" y="0.7" width="11.4" height="11.4" rx="2.6" fill="#fff" stroke="#6f6c78" stroke-width="1.15"/></svg><svg class="abs" style="left:41.9px;top:8.7px" width="7" height="7" viewBox="0 0 7 7"><path d="M1 0.9 L6 5.8 M6 0.9 L1 5.8" stroke="#c01a18" stroke-width="1.9"/></svg><svg class="abs" style="left:55.3px;top:3.7px" width="15" height="14" viewBox="0 0 15 14"><path d="M2.5 10.2 L11.5 1.3 L13.6 3.4 L4.6 12.3 Z" fill="#f0a234" stroke="#e59a2e" stroke-width="0.4"/><path d="M2.5 10.2 L4.6 12.3 L1.1 13.3 Z" fill="#f5deb0"/><path d="M1.1 13.3 L1.5 12.4 L2 12.9Z" fill="#333" stroke="#333" stroke-width="0.4"/></svg>
<div class="t" style="left:80.3px;letter-spacing:0.22px">25/10/22</div>
<div class="t r" style="right:1113.2px">9</div><div class="t r" style="right:1073.1px">6</div>
<div class="t" style="left:270.2px"><span style="letter-spacing:-0.2px">44 Receita da venda de produtos de fabricação pró...</span></div>
<div class="t r" style="right:572.6px">10.449,50</div>
<div class="t" style="left:770.9px;letter-spacing:0.02px">NF. N. 1/1 Cliente A</div>
<div class="nf" style="left:1224px;top:0.3px">NF</div>
</div>
<div class="row" style="top:487.15px;height:21.61px;background:#fff;color:#303030">
<svg class="abs" style="left:12.2px;top:4.4px" width="13" height="13" viewBox="0 0 13 13"><rect x="0.7" y="0.7" width="11.4" height="11.4" rx="2.6" fill="#fff" stroke="#6f6c78" stroke-width="1.15"/></svg><svg class="abs" style="left:41.9px;top:8.7px" width="7" height="7" viewBox="0 0 7 7"><path d="M1 0.9 L6 5.8 M6 0.9 L1 5.8" stroke="#c01a18" stroke-width="1.9"/></svg><svg class="abs" style="left:55.3px;top:3.7px" width="15" height="14" viewBox="0 0 15 14"><path d="M2.5 10.2 L11.5 1.3 L13.6 3.4 L4.6 12.3 Z" fill="#f0a234" stroke="#e59a2e" stroke-width="0.4"/><path d="M2.5 10.2 L4.6 12.3 L1.1 13.3 Z" fill="#f5deb0"/><path d="M1.1 13.3 L1.5 12.4 L2 12.9Z" fill="#333" stroke="#333" stroke-width="0.4"/></svg>
<div class="t" style="left:80.3px;letter-spacing:0.22px">25/10/22</div>
<div class="t r" style="right:1113.2px">9</div><div class="t r" style="right:1073.1px">7</div>
<div class="t" style="left:270.2px">135 PIS a recolher <span style="letter-spacing:0.12px">(2.01.02.01.03)</span></div>
<div class="t r" style="right:572.6px">172,42</div>
<div class="t" style="left:770.9px;letter-spacing:0.09px">VLR. PIS CFE. N/NF. N. 1/1 Cliente A</div>
<div class="nf" style="left:1224px;top:0.3px">NF</div>
</div>
<div class="row" style="top:508.46px;height:21.61px;background:#f1f2f3;color:#303030">
<svg class="abs" style="left:12.2px;top:4.4px" width="13" height="13" viewBox="0 0 13 13"><rect x="0.7" y="0.7" width="11.4" height="11.4" rx="2.6" fill="#fff" stroke="#6f6c78" stroke-width="1.15"/></svg><svg class="abs" style="left:41.9px;top:8.7px" width="7" height="7" viewBox="0 0 7 7"><path d="M1 0.9 L6 5.8 M6 0.9 L1 5.8" stroke="#c01a18" stroke-width="1.9"/></svg><svg class="abs" style="left:55.3px;top:3.7px" width="15" height="14" viewBox="0 0 15 14"><path d="M2.5 10.2 L11.5 1.3 L13.6 3.4 L4.6 12.3 Z" fill="#f0a234" stroke="#e59a2e" stroke-width="0.4"/><path d="M2.5 10.2 L4.6 12.3 L1.1 13.3 Z" fill="#f5deb0"/><path d="M1.1 13.3 L1.5 12.4 L2 12.9Z" fill="#333" stroke="#333" stroke-width="0.4"/></svg>
<div class="t" style="left:80.3px;letter-spacing:0.22px">25/10/22</div>
<div class="t r" style="right:1113.2px">9</div><div class="t r" style="right:1073.1px">8</div>
<div class="t" style="left:270.2px">136 COFINS a recolher <span style="letter-spacing:0.12px">(2.01.02.01.04)</span></div>
<div class="t r" style="right:572.6px">794,16</div>
<div class="t" style="left:770.9px;letter-spacing:0.09px">VLR. COFINS CFE. N/NF. N. 1/1 Cliente A</div>
<div class="nf" style="left:1224px;top:0.3px">NF</div>
</div>
<div class="row" style="top:529.77px;height:21.61px;background:#fff;color:#303030">
<svg class="abs" style="left:12.2px;top:4.4px" width="13" height="13" viewBox="0 0 13 13"><rect x="0.7" y="0.7" width="11.4" height="11.4" rx="2.6" fill="#fff" stroke="#6f6c78" stroke-width="1.15"/></svg><svg class="abs" style="left:41.9px;top:8.7px" width="7" height="7" viewBox="0 0 7 7"><path d="M1 0.9 L6 5.8 M6 0.9 L1 5.8" stroke="#c01a18" stroke-width="1.9"/></svg><svg class="abs" style="left:55.3px;top:3.7px" width="15" height="14" viewBox="0 0 15 14"><path d="M2.5 10.2 L11.5 1.3 L13.6 3.4 L4.6 12.3 Z" fill="#f0a234" stroke="#e59a2e" stroke-width="0.4"/><path d="M2.5 10.2 L4.6 12.3 L1.1 13.3 Z" fill="#f5deb0"/><path d="M1.1 13.3 L1.5 12.4 L2 12.9Z" fill="#333" stroke="#333" stroke-width="0.4"/></svg>
<div class="t" style="left:80.3px;letter-spacing:0.22px">25/10/22</div>
<div class="t r" style="right:1113.2px">12</div><div class="t r" style="right:1073.1px">1</div>
<div class="t" style="left:270.2px">235 Compras de matérias-primas <span style="letter-spacing:0.12px">(1.01.03.02.02)</span></div>
<div class="t r" style="right:672.5px">5.247,00</div>
<div class="t" style="left:770.9px;letter-spacing:0.02px">NF. N. 1235/1 Fornecedor A</div>
<div class="nf" style="left:1224px;top:0.3px">NF</div>
</div>
<div class="row" style="top:551.09px;height:21.61px;background:#f1f2f3;color:#303030">
<svg class="abs" style="left:12.2px;top:4.4px" width="13" height="13" viewBox="0 0 13 13"><rect x="0.7" y="0.7" width="11.4" height="11.4" rx="2.6" fill="#fff" stroke="#6f6c78" stroke-width="1.15"/></svg><svg class="abs" style="left:41.9px;top:8.7px" width="7" height="7" viewBox="0 0 7 7"><path d="M1 0.9 L6 5.8 M6 0.9 L1 5.8" stroke="#c01a18" stroke-width="1.9"/></svg><svg class="abs" style="left:55.3px;top:3.7px" width="15" height="14" viewBox="0 0 15 14"><path d="M2.5 10.2 L11.5 1.3 L13.6 3.4 L4.6 12.3 Z" fill="#f0a234" stroke="#e59a2e" stroke-width="0.4"/><path d="M2.5 10.2 L4.6 12.3 L1.1 13.3 Z" fill="#f5deb0"/><path d="M1.1 13.3 L1.5 12.4 L2 12.9Z" fill="#333" stroke="#333" stroke-width="0.4"/></svg>
<div class="t" style="left:80.3px;letter-spacing:0.22px">25/10/22</div>
<div class="t r" style="right:1113.2px">12</div><div class="t r" style="right:1073.1px">2</div>
<div class="t" style="left:270.2px">26 PIS a recuperar <span style="letter-spacing:0.12px">(1.01.02.04.03)</span></div>
<div class="t r" style="right:672.5px">86,58</div>
<div class="t" style="left:770.9px;letter-spacing:0.09px">VLR. PIS CFE. S/NF. N. 1235/1 Fornecedor A</div>
<div class="nf" style="left:1224px;top:0.3px">NF</div>
</div>
<div class="row" style="top:572.40px;height:21.61px;background:#fff;color:#303030">
<svg class="abs" style="left:12.2px;top:4.4px" width="13" height="13" viewBox="0 0 13 13"><rect x="0.7" y="0.7" width="11.4" height="11.4" rx="2.6" fill="#fff" stroke="#6f6c78" stroke-width="1.15"/></svg><svg class="abs" style="left:41.9px;top:8.7px" width="7" height="7" viewBox="0 0 7 7"><path d="M1 0.9 L6 5.8 M6 0.9 L1 5.8" stroke="#c01a18" stroke-width="1.9"/></svg><svg class="abs" style="left:55.3px;top:3.7px" width="15" height="14" viewBox="0 0 15 14"><path d="M2.5 10.2 L11.5 1.3 L13.6 3.4 L4.6 12.3 Z" fill="#f0a234" stroke="#e59a2e" stroke-width="0.4"/><path d="M2.5 10.2 L4.6 12.3 L1.1 13.3 Z" fill="#f5deb0"/><path d="M1.1 13.3 L1.5 12.4 L2 12.9Z" fill="#333" stroke="#333" stroke-width="0.4"/></svg>
<div class="t" style="left:80.3px;letter-spacing:0.22px">25/10/22</div>
<div class="t r" style="right:1113.2px">12</div><div class="t r" style="right:1073.1px">3</div>
<div class="t" style="left:270.2px">27 COFINS a recuperar <span style="letter-spacing:0.12px">(1.01.02.04.04)</span></div>
<div class="t r" style="right:672.5px">398,77</div>
<div class="t" style="left:770.9px;letter-spacing:0.09px">VLR. COFINS CFE. S/NF. N. 1235/1 Fornecedor A</div>
<div class="nf" style="left:1224px;top:0.3px">NF</div>
</div>
<div class="row" style="top:593.71px;height:8.29px;background:#f1f2f3;color:#303030">
<svg class="abs" style="left:12.2px;top:4.4px" width="13" height="13" viewBox="0 0 13 13"><rect x="0.7" y="0.7" width="11.4" height="11.4" rx="2.6" fill="#fff" stroke="#6f6c78" stroke-width="1.15"/></svg><svg class="abs" style="left:41.9px;top:8.7px" width="7" height="7" viewBox="0 0 7 7"><path d="M1 0.9 L6 5.8 M6 0.9 L1 5.8" stroke="#c01a18" stroke-width="1.9"/></svg><svg class="abs" style="left:55.3px;top:3.7px" width="15" height="14" viewBox="0 0 15 14"><path d="M2.5 10.2 L11.5 1.3 L13.6 3.4 L4.6 12.3 Z" fill="#f0a234" stroke="#e59a2e" stroke-width="0.4"/><path d="M2.5 10.2 L4.6 12.3 L1.1 13.3 Z" fill="#f5deb0"/><path d="M1.1 13.3 L1.5 12.4 L2 12.9Z" fill="#333" stroke="#333" stroke-width="0.4"/></svg>
<div class="t" style="left:80.3px;letter-spacing:0.22px">25/10/22</div>
<div class="t r" style="right:1113.2px">12</div><div class="t r" style="right:1073.1px">4</div>
<div class="t" style="left:270.2px">36 Fornecedores <span style="letter-spacing:0.12px">(2.01.01.01)</span></div>
<div class="t r" style="right:572.6px">5.247,00</div>
<div class="t" style="left:770.9px;letter-spacing:0.02px">NF. N. 1235/1 Fornecedor A</div>
<svg class="abs" style="left:1202.1px;top:2.2px" width="17" height="17" viewBox="0 0 17 17"><g stroke="#f2b100" stroke-width="1.1"><rect x="6" y="0.9" width="6.3" height="13.9" rx="1.7" fill="#fbe794"/><path d="M7.4 4.4H10.9M7.4 6.4H10.9M7.4 8.4H10.9M7.4 10.4H10.9M7.4 12.4H10.9" stroke="#f5c02a" stroke-width="0.9"/><rect x="1" y="6.3" width="5.3" height="9.4" rx="1.7" fill="#fce99a"/><path d="M2.4 10.3H4.9M2.4 12.3H4.9" stroke="#f5c02a" stroke-width="0.9"/><rect x="10.8" y="11" width="5.4" height="4.8" rx="1.7" fill="#fbe17c"/></g></svg>
<div class="nf" style="left:1224px;top:3.2px">NF</div>
</div>
<div class="vl" style="left:43.7px;top:231px;height:371px;background:rgba(0,0,0,0.09)"></div>
<div class="vl" style="left:79px;top:231px;height:371px;background:rgba(0,0,0,0.09)"></div>
<div class="vl" style="left:149px;top:231px;height:371px;background:rgba(0,0,0,0.09)"></div>
<div class="vl" style="left:229.2px;top:231px;height:371px;background:rgba(0,0,0,0.09)"></div>
<div class="vl" style="left:268.5px;top:231px;height:371px;background:rgba(0,0,0,0.09)"></div>
<div class="vl" style="left:569px;top:231px;height:371px;background:rgba(0,0,0,0.09)"></div>
<div class="vl" style="left:669.4px;top:231px;height:371px;background:rgba(0,0,0,0.09)"></div>
<div class="vl" style="left:769.4px;top:231px;height:371px;background:rgba(0,0,0,0.09)"></div>
<div class="vl" style="left:1269.2px;top:231px;height:371px;background:rgba(0,0,0,0.09)"></div>
<div class="abs" style="left:1335px;top:231px;width:17px;height:371px;background:#f1f1f1"></div>
<div class="abs" style="left:1338px;top:249.5px;width:11.8px;height:108.5px;background:#c1c1c1"></div>
<svg class="abs" style="left:1339px;top:238px" width="9" height="6" viewBox="0 0 9 6"><path d="M0.5 5.5 L4.5 1 L8.5 5.5Z" fill="#a9a9a9"/></svg>
<svg class="abs" style="left:1339px;top:590px" width="9" height="6" viewBox="0 0 9 6"><path d="M0.5 0.5 L4.5 5 L8.5 0.5Z" fill="#444"/></svg>
<div class="abs" style="left:6px;top:602px;width:1329px;height:17.5px;background:#f1f1f1"></div>
<div class="abs" style="left:1335px;top:602px;width:17px;height:17.5px;background:#dcdcdc"></div>
<div class="abs" style="left:22.5px;top:605px;width:965.5px;height:11px;background:#c1c1c1"></div>
<svg class="abs" style="left:10.5px;top:606px" width="6" height="9" viewBox="0 0 6 9"><path d="M5.5 0.5 L1 4.5 L5.5 8.5Z" fill="#a9a9a9"/></svg>
<svg class="abs" style="left:1324.5px;top:606px" width="6" height="9" viewBox="0 0 6 9"><path d="M0.5 0.5 L5 4.5 L0.5 8.5Z" fill="#444"/></svg>
<div class="abs" style="left:6px;top:619px;width:1329px;height:22px;background:#c0c0c0;border-top:1px solid #a9b1bb"></div>
<div class="abs" style="left:1335px;top:619px;width:17px;height:22px;background:#f1f1f1;border-top:1px solid #a9b1bb"></div>
<div class="vl" style="left:43.7px;top:620.5px;height:20.5px;background:#dadada"></div>
<div class="vl" style="left:79px;top:620.5px;height:20.5px;background:#dadada"></div>
<div class="vl" style="left:149px;top:620.5px;height:20.5px;background:#dadada"></div>
<div class="vl" style="left:229.2px;top:620.5px;height:20.5px;background:#dadada"></div>
<div class="vl" style="left:268.5px;top:620.5px;height:20.5px;background:#dadada"></div>
<div class="vl" style="left:569px;top:620.5px;height:20.5px;background:#dadada"></div>
<div class="vl" style="left:669.4px;top:620.5px;height:20.5px;background:#dadada"></div>
<div class="vl" style="left:769.4px;top:620.5px;height:20.5px;background:#dadada"></div>
<div class="vl" style="left:1269.2px;top:620.5px;height:20.5px;background:#dadada"></div>
<div class="t " style="top:623.5px;left:13px;color:#333">Totais:</div>
<div class="t " style="top:623.5px;right:695.5px;color:#333">929.420,55</div>
<div class="t " style="top:623.5px;right:595.6px;color:#333">929.420,55</div>
</body></html>
